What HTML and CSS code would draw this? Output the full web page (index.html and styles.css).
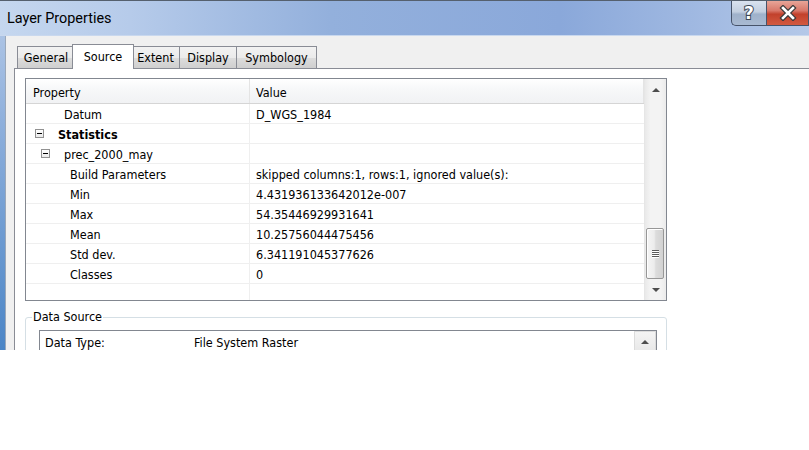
FILE: index.html
```html
<!DOCTYPE html>
<html>
<head>
<meta charset="utf-8">
<title>Layer Properties</title>
<link rel="stylesheet" href="styles.css">
</head>
<body>
<div class="window">
  <div class="titlebar">
    <div class="title">Layer Properties</div>
    <div class="caption-buttons">
      <div class="cbtn help">
        <svg width="20" height="20" viewBox="0 0 20 20"><text x="10" y="16" text-anchor="middle" class="qmark">?</text></svg>
      </div>
      <div class="cbtn close">
        <svg width="18" height="16" viewBox="0 0 18 16">
          <path d="M4 3 L14 13 M14 3 L4 13" stroke="#3a3a3a" stroke-width="5" stroke-linecap="square"/>
          <path d="M4 3 L14 13 M14 3 L4 13" stroke="#ffffff" stroke-width="2.6" stroke-linecap="square"/>
        </svg>
      </div>
    </div>
  </div>
  <div class="client">
    <div class="tabs">
      <div class="tab t-general">General</div>
      <div class="tab active t-source">Source</div>
      <div class="tab t-extent">Extent</div>
      <div class="tab t-display">Display</div>
      <div class="tab t-symbology">Symbology</div>
    </div>
    <div class="panel">
      <div class="grid">
        <div class="grid-body">
          <div class="grid-header"><div class="c1">Property</div><div class="c2">Value</div></div>
          <div class="row"><div class="c1 lvl2">Datum</div><div class="c2">D_WGS_1984</div></div>
          <div class="row"><div class="c1 lvl0"><span class="exp"></span><b>Statistics</b></div><div class="c2"></div></div>
          <div class="row"><div class="c1 lvl1"><span class="exp"></span>prec_2000_may</div><div class="c2"></div></div>
          <div class="row"><div class="c1 lvl3">Build Parameters</div><div class="c2">skipped columns:1, rows:1, ignored value(s):</div></div>
          <div class="row"><div class="c1 lvl3">Min</div><div class="c2">4.431936133642012e-007</div></div>
          <div class="row"><div class="c1 lvl3">Max</div><div class="c2">54.35446929931641</div></div>
          <div class="row"><div class="c1 lvl3">Mean</div><div class="c2">10.25756044475456</div></div>
          <div class="row"><div class="c1 lvl3">Std dev.</div><div class="c2">6.341191045377626</div></div>
          <div class="row"><div class="c1 lvl3">Classes</div><div class="c2">0</div></div>
          <div class="row"><div class="c1"></div><div class="c2"></div></div>
        </div>
        <div class="vscroll">
          <div class="sbtn"><i class="arrow up"></i></div>
          <div class="track"><div class="thumb"><i></i><i></i><i></i><i></i></div></div>
          <div class="sbtn"><i class="arrow down"></i></div>
        </div>
      </div>
      <fieldset class="group">
        <legend>Data Source</legend>
        <div class="listbox">
          <div class="lb-row"><span class="lb-key">Data Type:</span><span>File System Raster</span></div>
          <div class="lb-scroll"><div class="sbtn boxed"><i class="arrow up"></i></div></div>
        </div>
      </fieldset>
    </div>
  </div>
</div>
</body>
</html>
```

FILE: styles.css
```css
* { box-sizing: border-box; }

body {
  margin: 0;
  background: #ffffff;
  font-family: "DejaVu Sans Condensed", "DejaVu Sans", sans-serif;
  color: #000;
}

.window {
  width: 809px;
  height: 350px;
  overflow: hidden;
  display: flex;
  flex-direction: column;
  background: linear-gradient(to bottom, #b7cbe8 0, #8fb0dc 120px, #4b85c6 350px);
}

.titlebar {
  height: 36px;
  flex: none;
  display: flex;
  align-items: flex-start;
  border-top: 1px solid #55606e;
  border-bottom: 1px solid #c9d8ee;
  background: linear-gradient(to right, #c5d7ef 0, #b6cbea 130px, #93b0dc 330px, #8aa8da 560px, #9fb8e1 690px, #b4c8e8 809px);
}

.title {
  padding: 9px 0 0 7px;
  font-family: Roboto, "Noto Sans", sans-serif;
  font-size: 14.4px;
  color: #000;
}

.caption-buttons {
  margin-left: auto;
  display: flex;
}

.cbtn {
  height: 25px;
  display: flex;
  align-items: center;
  justify-content: center;
  border: 1px solid #46536a;
  border-top: none;
}

.cbtn.help {
  width: 35px;
  border-right: none;
  border-bottom-left-radius: 5px;
  background: linear-gradient(to bottom, #d9e2ef 0, #c3cfe0 45%, #9fb1ca 55%, #a9bad2 100%);
}

.cbtn.close {
  width: 43px;
  background: linear-gradient(to bottom, #e8a598 0, #d8786a 40%, #c2412c 55%, #d25a40 100%);
}

.qmark {
  font-family: "DejaVu Sans", sans-serif;
  font-weight: bold;
  font-size: 17px;
  fill: #ffffff;
  stroke: #3b4656;
  stroke-width: 2px;
  paint-order: stroke fill;
}

.client {
  flex: 1;
  min-height: 0;
  margin-left: 5px;
  border-left: 1px solid #9aa8ba;
  background: #f0f0f0;
  padding: 8px 0 0 8px;
  display: flex;
  flex-direction: column;
}

.tabs {
  display: flex;
  align-items: flex-end;
  padding-left: 3px;
  height: 24px;
  flex: none;
}

.tab {
  height: 22px;
  padding: 0 6px;
  display: flex;
  align-items: center;
  justify-content: center;
  font-size: 12.5px;
  border: 1px solid #898c95;
  border-bottom: none;
  border-right: none;
  background: linear-gradient(to bottom, #f2f2f2 0, #ebebeb 50%, #dddddd 51%, #cfcfcf 100%);
}

.tab.t-general { width: 57px; }
.tab.t-extent { width: 47px; border-left: none; }
.tab.t-display { width: 57px; }
.tab.t-symbology { width: 81px; border-right: 1px solid #898c95; }

.tab.active {
  width: 62px;
  height: 25px;
  margin: 0 -2px -1px -2px;
  padding-bottom: 2px;
  background: #ffffff;
  border-right: 1px solid #898c95;
  position: relative;
  z-index: 1;
}

.panel {
  flex: 1;
  min-height: 0;
  background: #ffffff;
  border-top: 1px solid #898c95;
  border-left: 1px solid #898c95;
  padding: 9px 0 0 10px;
  overflow: hidden;
}

.grid {
  width: 642px;
  height: 223px;
  border: 1px solid #828790;
  display: flex;
  font-size: 12.5px;
}

.grid-body {
  flex: 1;
  overflow: hidden;
}

.grid-header {
  display: flex;
  height: 25px;
  border-bottom: 1px solid #d5d5d5;
  background: linear-gradient(to bottom, #ffffff 0, #f7f8f9 40%, #f1f2f4 100%);
}

.grid-header .c1 {
  padding-left: 7px;
  border-right: 1px solid #e4e4e4;
}

.grid-header .c2 {
  border-right: 1px solid #e4e4e4;
}

.row {
  display: flex;
  height: 20px;
  border-bottom: 1px solid #efefef;
}

.c1 {
  width: 224px;
  flex: none;
  display: flex;
  align-items: center;
  padding-top: 2px;
  border-right: 1px solid #efefef;
  white-space: nowrap;
}

.c2 {
  flex: 1;
  display: flex;
  align-items: center;
  padding: 2px 0 0 6px;
  white-space: nowrap;
}

.lvl0 { padding-left: 9px; }
.lvl1 { padding-left: 15px; }
.lvl2 { padding-left: 38px; }
.lvl3 { padding-left: 44px; }

.exp {
  width: 9px;
  height: 9px;
  margin-right: 14px;
  margin-top: -2px;
  border: 1px solid #919191;
  background: linear-gradient(to bottom, #ffffff, #eaeaea);
  display: flex;
  align-items: center;
  justify-content: center;
}

.exp::after {
  content: "";
  width: 5px;
  height: 1px;
  background: #000;
}

.vscroll {
  width: 22px;
  flex: none;
  display: flex;
  flex-direction: column;
  border-left: 1px solid #e6e6e6;
  background: linear-gradient(to right, #e9e9e9 0, #f3f3f3 25%, #f3f3f3 75%, #ebebeb 100%);
}

.sbtn {
  height: 21px;
  flex: none;
  display: flex;
  align-items: center;
  justify-content: center;
}

.track {
  flex: 1;
  display: flex;
  flex-direction: column;
  justify-content: flex-end;
}

.thumb {
  height: 51px;
  margin: 0 2px 0 1px;
  border: 1px solid #979797;
  border-radius: 2px;
  background: linear-gradient(to right, #f5f5f5 0, #ececec 45%, #dcdcdc 55%, #d2d2d2 100%);
  box-shadow: inset 1px 1px 0 #ffffff;
  display: flex;
  flex-direction: column;
  align-items: center;
  justify-content: center;
  gap: 1px;
}

.thumb i {
  display: block;
  width: 7px;
  height: 1px;
  background: #5a5a5a;
  box-shadow: 0 1px 0 #ffffff;
}

.arrow {
  display: block;
  width: 0;
  height: 0;
  border-left: 4px solid transparent;
  border-right: 4px solid transparent;
}

.arrow.up { border-bottom: 4px solid #4d4d4d; }
.arrow.down { border-top: 4px solid #4d4d4d; }

.group {
  width: 642px;
  height: 70px;
  margin: 9px 0 0 0;
  padding: 0;
  border: 1px solid #d5dfe5;
  border-radius: 3px;
  min-width: 0;
}

.group legend {
  margin-left: 6px;
  padding: 0 1px;
  font-size: 12.5px;
  line-height: 14px;
}

.listbox {
  width: 618px;
  height: 40px;
  margin: 6px 0 0 13px;
  border: 1px solid #828790;
  border-bottom: none;
  display: flex;
  font-size: 12.5px;
}

.lb-row {
  flex: 1;
  height: 20px;
  display: flex;
  align-items: center;
  padding: 2px 0 0 5px;
}

.lb-key {
  width: 149px;
  flex: none;
}

.lb-scroll {
  width: 22px;
  flex: none;
  background: #f0f0f0;
}

.sbtn.boxed {
  height: 21px;
  border: 1px solid #dcdcdc;
  background: linear-gradient(to bottom, #f4f4f4, #e8e8e8);
}
```
